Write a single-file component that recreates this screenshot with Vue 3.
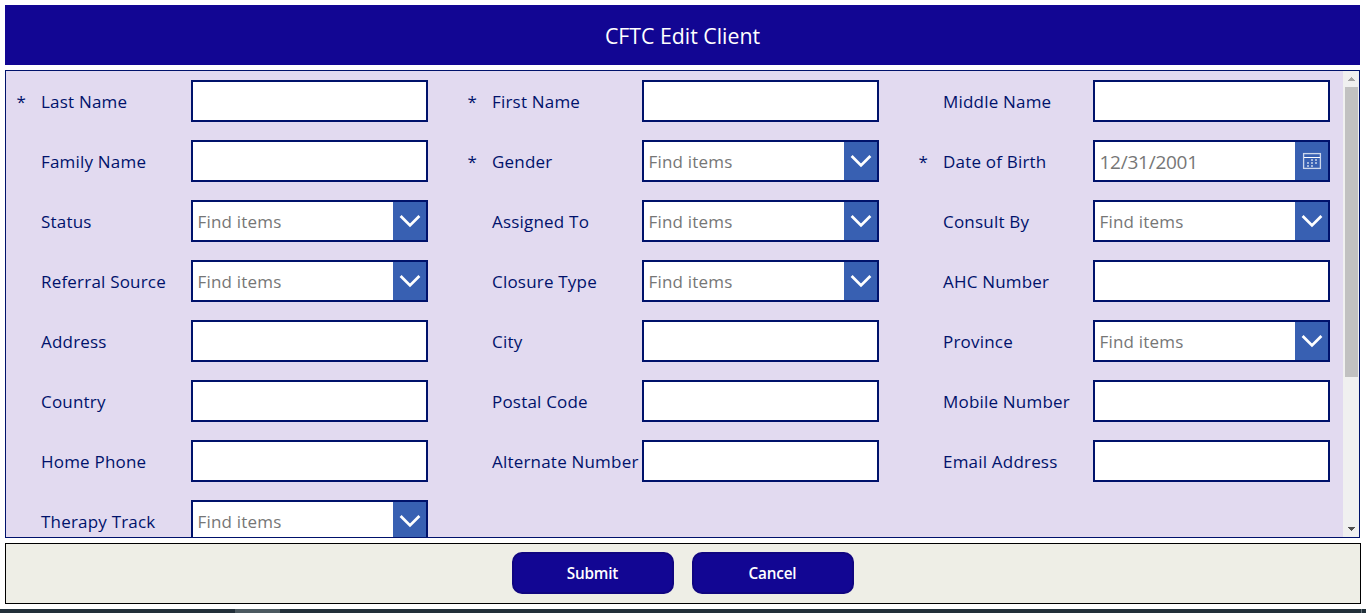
<script setup>
const f = (label, type = 'text', required = false) => ({ label, type, required })

const fields = [
  f('Last Name', 'text', true), f('First Name', 'text', true), f('Middle Name'),
  f('Family Name'), f('Gender', 'select', true), f('Date of Birth', 'date', true),
  f('Status', 'select'), f('Assigned To', 'select'), f('Consult By', 'select'),
  f('Referral Source', 'select'), f('Closure Type', 'select'), f('AHC Number'),
  f('Address'), f('City'), f('Province', 'select'),
  f('Country'), f('Postal Code'), f('Mobile Number'),
  f('Home Phone'), f('Alternate Number'), f('Email Address'),
  f('Therapy Track', 'select')
]
</script>

<template>
  <div class="screen">
    <header class="header">CFTC Edit Client</header>

    <main class="panel">
      <div class="grid">
        <div v-for="field in fields" :key="field.label" class="field">
          <span class="star">{{ field.required ? '*' : '' }}</span>
          <span class="label">{{ field.label }}</span>
          <div class="box">
            <template v-if="field.type === 'select'">
              <span class="placeholder">Find items</span>
              <span class="tool">
                <svg width="33" height="38" viewBox="0 0 33 38">
                  <path d="M7.6 14.1 L17 23.4 L26.4 14.1" fill="none" stroke="#fff" stroke-width="2.8" />
                </svg>
              </span>
            </template>
            <template v-else-if="field.type === 'date'">
              <span class="placeholder date">12/31/2001</span>
              <span class="tool">
                <svg width="33" height="38" viewBox="0 0 33 38">
                  <rect x="8.6" y="11.6" width="16.8" height="14.8" fill="none" stroke="#ccd7ec" stroke-width="1.3" />
                  <path d="M9 15.5 H25" stroke="#fff" />
                  <path d="M16 18h2M20 18h2M12 21h2M16 21h2M20 21h2M12 24h2M16 24h2" stroke="#c8d4ea" stroke-width="1.7" />
                </svg>
              </span>
            </template>
          </div>
        </div>
      </div>
      <div class="scrollbar">
        <svg class="arrow" width="16" height="16" viewBox="0 0 16 16" shape-rendering="crispEdges">
          <path d="M8 6h1v1h1v1h1v1h1v1h-7v-1h1v-1h1v-1h1z" fill="#a3a3a3" />
        </svg>
        <div class="thumb"></div>
        <svg class="arrow last" width="16" height="16" viewBox="0 0 16 16" shape-rendering="crispEdges">
          <path d="M5 6h7v1h-1v1h-1v1h-1v1h-1v-1h-1v-1h-1v-1h-1z" fill="#505050" />
        </svg>
      </div>
    </main>

    <footer class="footer">
      <button class="btn">Submit</button>
      <button class="btn">Cancel</button>
    </footer>

    <div class="taskbar"><span class="task"></span><span class="edge"></span></div>
  </div>
</template>

<style>
body { margin: 0; background: #fff; overflow: hidden; }
</style>

<style scoped>
.screen {
  width: 1366px;
  height: 613px;
  box-sizing: border-box;
  padding-top: 5px;
  display: flex;
  flex-direction: column;
  gap: 5px;
  background: #fff;
  overflow: hidden;
  font-family: "Open Sans", "Noto Sans", sans-serif;
}
.header {
  width: 1355px;
  height: 60px;
  margin-left: 5px;
  line-height: 62px;
  text-align: center;
  background: #120693;
  color: #fff;
  font-size: 21.3px;
  flex: none;
}
.panel {
  width: 1355px;
  height: 468px;
  margin-left: 5px;
  box-sizing: border-box;
  border: 1px solid #00126b;
  background: #e2daf0;
  display: flex;
  justify-content: space-between;
  overflow: hidden;
  flex: none;
}
.grid {
  width: 1337px;
  display: grid;
  grid-template-columns: 451px 451px 435px;
  grid-auto-rows: 60px;
}
.field {
  display: grid;
  grid-template-columns: 35px 150px 237px;
  padding-top: 9px;
  height: 42px;
  line-height: 44px;
  color: #00126b;
  font-size: 17px;
  font-weight: 400;
  letter-spacing: 0.2px;
  white-space: nowrap;
}
.star { padding-left: 10.5px; }
.box {
  box-sizing: border-box;
  height: 42px;
  border: 2px solid #00126b;
  background: #fff;
  display: flex;
  justify-content: space-between;
}
.placeholder {
  padding-left: 4.5px;
  line-height: 40px;
  color: #767676;
}
.placeholder.date { font-size: 19px; letter-spacing: -0.25px; }
.tool { width: 33px; height: 38px; background: #3860b2; }
.tool svg { display: block; }
.scrollbar {
  width: 16px;
  background: #f0f0f0;
  display: flex;
  flex-direction: column;
}
.arrow { display: block; flex: none; }
.thumb { width: 13px; height: 290px; margin-left: 2px; background: #c1c1c1; }
.last { margin-top: auto; }
.footer {
  width: 1356px;
  height: 61px;
  margin-left: 5px;
  box-sizing: border-box;
  border: 1px solid #000;
  background: #eeeee6;
  display: flex;
  justify-content: center;
  gap: 18px;
  padding-top: 8px;
  flex: none;
}
.btn {
  width: 162px;
  height: 42px;
  box-sizing: border-box;
  border: 2px solid #100580;
  border-radius: 10px;
  background: #120693;
  color: #fff;
  padding: 0 1px 0 0;
  font: 600 15.3px "Open Sans", "Noto Sans", sans-serif;
  letter-spacing: -0.2px;
}
.taskbar { height: 4px; flex: none; background: #22303a; display: flex; }
.task { width: 45px; margin-left: 235px; background: #4b5960; }
.edge { width: 1px; margin-left: 1081px; background: #6c7880; }
</style>
